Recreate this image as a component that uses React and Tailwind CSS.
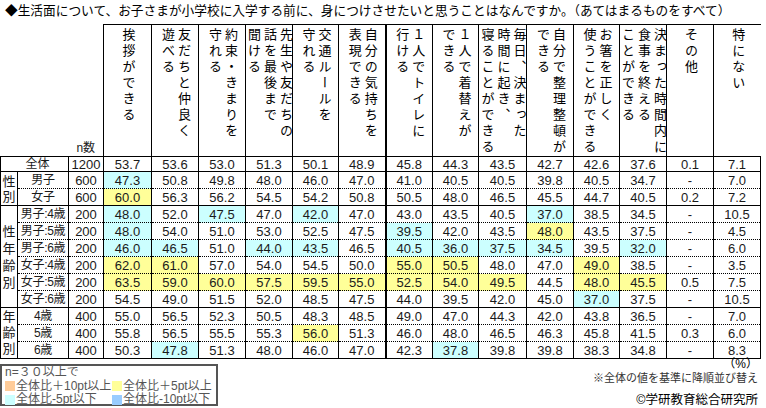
import React from 'react';

const FONT = "font-['Liberation_Sans','Noto_Sans_CJK_JP',sans-serif]";

// column widths of the 14 answer columns
const widths = [48, 47, 47, 47, 46, 47, 47, 46, 48, 47, 46, 47, 47, 47];

const headers = [
  ['挨拶ができる'],
  ['友だちと仲良く', '遊べる'],
  ['約束・きまりを', '守れる'],
  ['先生や友だちの', '話を最後まで', '聞ける'],
  ['交通ルールを', '守れる'],
  ['自分の気持ちを', '表現できる'],
  ['１人でトイレに', '行ける'],
  ['１人で着替えが', 'できる'],
  ['毎日、決まった', '時間に起き、', '寝ることができる'],
  ['自分で整理整頓が', 'できる'],
  ['お箸を正しく', '使うことができる'],
  ['決まった時間内に', '食事を終える', 'ことができる'],
  ['その他'],
  ['特にない'],
];

const groups = [
  {
    label: null,
    rows: [['全体', '1200', '53.7 53.6 53.0 51.3 50.1 48.9 45.8 44.3 43.5 42.7 42.6 37.6 0.1 7.1']],
  },
  {
    label: ['性', '別'],
    lead: 'leading-[15px]',
    rows: [
      ['男子', '600', '47.3c 50.8 49.8 48.0 46.0 47.0 41.0 40.5 40.5 39.8 40.5 34.7 - 7.0'],
      ['女子', '600', '60.0y 56.3 56.2 54.5 54.2 50.8 50.5 48.0 46.5 45.5 44.7 40.5 0.2 7.2'],
    ],
  },
  {
    label: ['性', '年', '齢', '別'],
    lead: 'leading-[17px]',
    rows: [
      ['男子:4歳', '200', '48.0c 52.0 47.5c 47.0 42.0c 47.0 43.0 43.5 40.5 37.0c 38.5 34.5 - 10.5'],
      ['男子:5歳', '200', '48.0c 54.0 51.0 53.0 52.5 47.5 39.5c 42.0 43.5 48.0y 43.5 37.5 - 4.5'],
      ['男子:6歳', '200', '46.0c 46.5c 51.0 44.0c 43.5c 46.5 40.5c 36.0c 37.5c 34.5c 39.5 32.0c - 6.0'],
      ['女子:4歳', '200', '62.0y 61.0y 57.0 54.0 54.5 50.0 55.0y 50.5y 48.0 47.0 49.0y 38.5 - 3.5'],
      ['女子:5歳', '200', '63.5y 59.0y 60.0y 57.5y 59.5y 55.0y 52.5y 54.0y 49.5y 44.5 48.0y 45.5y 0.5 7.5'],
      ['女子:6歳', '200', '54.5 49.0 51.5 52.0 48.5 47.5 44.0 39.5 42.0 45.0 37.0c 37.5 - 10.5'],
    ],
  },
  {
    label: ['年', '齢', '別'],
    lead: 'leading-[16px]',
    rows: [
      ['4歳', '400', '55.0 56.5 52.3 50.5 48.3 48.5 49.0 47.0 44.3 42.0 43.8 36.5 - 7.0'],
      ['5歳', '400', '55.8 56.5 55.5 55.3 56.0y 51.3 46.0 48.0 46.5 46.3 45.8 41.5 0.3 6.0'],
      ['6歳', '400', '50.3 47.8c 51.3 48.0 46.0 47.0 42.3 37.8c 39.8 39.8 38.3 34.8 - 8.3'],
    ],
  },
];

function parse(v) {
  const last = v.slice(-1);
  if (last === 'c') return { text: v.slice(0, -1), bg: 'bg-[#ccffff]' };
  if (last === 'y') return { text: v.slice(0, -1), bg: 'bg-[#ffff99]' };
  return { text: v, bg: '' };
}

function HeaderCell({ lines, thick }) {
  return (
    <th className={`h-[132px] p-0 align-top font-normal border-t border-l border-black ${thick ? 'border-l-2' : ''}`}>
      <div className="flex justify-center pt-[3px] h-full">
        <div className="[writing-mode:vertical-rl] text-[13px] leading-[16px] tracking-[3px] text-black text-left">
          {lines.map((l, i) => (
            <div key={i}>{l}</div>
          ))}
        </div>
      </div>
    </th>
  );
}

function BodyRows() {
  const out = [];
  groups.forEach((g, gi) => {
    g.rows.forEach((r, ri) => {
      const first = ri === 0;
      const top = first ? '' : '[border-top-style:dotted]';
      const h = gi === 0 ? 'h-[15px]' : 'h-[17px]';
      const vals = r[2].split(' ').map(parse);
      out.push(
        <tr key={`${gi}-${ri}`} className={h}>
          {gi === 0 && (
            <td colSpan={2} className="border-t border-l border-black p-0 text-center text-[12px] leading-none pl-[6px]">
              {r[0]}
            </td>
          )}
          {gi > 0 && first && (
            <td rowSpan={g.rows.length} className="border-t border-l border-black p-0 text-center align-middle text-[13px]">
              <div className={`flex flex-col items-center ${g.lead}`}>
                {g.label.map((c) => (
                  <span key={c}>{c}</span>
                ))}
              </div>
            </td>
          )}
          {gi > 0 && (
            <td className={`border-t border-l border-black p-0 text-center text-[12px] leading-none whitespace-nowrap tracking-[-0.3px] ${top}`}>
              {r[0]}
            </td>
          )}
          <td className={`border-t border-l border-black p-0 text-center text-[13px] leading-none ${top}`}>{r[1]}</td>
          {vals.map((v, i) => (
            <td
              key={i}
              className={`border-t border-l border-black p-0 text-center text-[13px] leading-none ${v.bg} ${top} ${
                i === 6 ? 'border-l-2' : ''
              } ${i === 13 ? 'border-r' : ''}`}
            >
              {v.text}
            </td>
          ))}
        </tr>
      );
    });
  });
  return out;
}

function Swatch({ color, label }) {
  return (
    <div className="flex items-center gap-[1px]">
      <span className={`inline-block w-[10px] h-[10px] ${color}`} />
      <span>{label}</span>
    </div>
  );
}

export default function App() {
  return (
    <div className={`w-[766px] h-[408px] bg-white overflow-hidden text-[#1a1a1a] ${FONT}`}>
      <div className="h-[24px] flex items-center pl-[5px] text-[12.7px] text-black whitespace-nowrap">
        ◆生活面について、お子さまが小学校に入学する前に、身につけさせたいと思うことはなんですか。（あてはまるものをすべて）
      </div>

      <table className="border-collapse table-fixed w-[761px] border-b border-black">
        <colgroup>
          <col className="w-[17px]" />
          <col className="w-[51px]" />
          <col className="w-[35px]" />
          {widths.map((w, i) => (
            <col key={i} style={{ width: w }} />
          ))}
        </colgroup>
        <thead>
          <tr>
            <th colSpan={2} className="p-0" />
            <th className="p-0 align-bottom font-normal text-[12px] leading-none pb-[2px]">n数</th>
            {headers.map((lines, i) => (
              <HeaderCell key={i} lines={lines} thick={i === 6} />
            ))}
          </tr>
        </thead>
        <tbody>
          <BodyRows />
        </tbody>
      </table>

      <div className="flex justify-between w-[760px]">
        <div className="mt-[5px] w-[218px] h-[42px] border-2 border-[#555] px-[3px] text-[12px] leading-[13.5px] text-[#555]">
          <div>n=３０以上で</div>
          <div className="grid grid-cols-[107px_1fr]">
            <Swatch color="bg-[#ffcc99]" label="全体比＋10pt以上" />
            <Swatch color="bg-[#ffff99]" label="全体比＋5pt以上" />
            <Swatch color="bg-[#ccffff]" label="全体比-5pt以下" />
            <Swatch color="bg-[#99ccff]" label="全体比-10pt以下" />
          </div>
        </div>
        <div className="flex flex-col items-end pr-[2px] text-black">
          <div className="text-[12px] leading-[12px] mt-[-1px]">（%）</div>
          <div className="text-[11px] leading-[16px] text-[#333]">※全体の値を基準に降順並び替え</div>
          <div className="text-[12.5px] leading-[16px] mt-[6px]">©学研教育総合研究所</div>
        </div>
      </div>
    </div>
  );
}
